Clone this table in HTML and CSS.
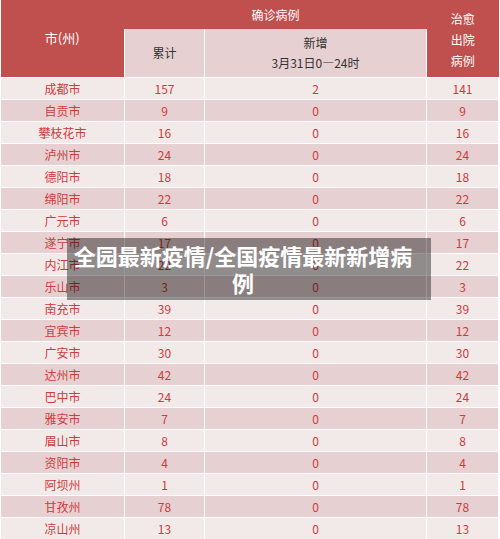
FILE: index.html
```html
<!DOCTYPE html>
<html lang="zh-CN">
<head>
  <meta charset="UTF-8" />
  <title>四川省疫情统计</title>
  <link rel="stylesheet" href="styles.css">
</head>
<body>
  <div class="page">
    <table class="stats">
      <colgroup>
        <col class="c-city">
        <col class="c-total">
        <col class="c-new">
        <col class="c-cured">
      </colgroup>
      <thead>
        <tr class="head-top">
          <th rowspan="2">市(州)</th>
          <th colspan="2">确诊病例</th>
          <th rowspan="2" class="cured">治愈<br>出院<br>病例</th>
        </tr>
        <tr class="head-sub">
          <th class="sub">累计</th>
          <th class="sub">新增<br>3月31日0—24时</th>
        </tr>
      </thead>
      <tbody id="rows"></tbody>
    </table>

    <div class="caption">全园最新疫情/全国疫情最新新增病例</div>
  </div>

  <script>
    var data = [
      ['成都市', 157, 2, 141],
      ['自贡市', 9, 0, 9],
      ['攀枝花市', 16, 0, 16],
      ['泸州市', 24, 0, 24],
      ['德阳市', 18, 0, 18],
      ['绵阳市', 22, 0, 22],
      ['广元市', 6, 0, 6],
      ['遂宁市', 17, 0, 17],
      ['内江市', 22, 0, 22],
      ['乐山市', 3, 0, 3],
      ['南充市', 39, 0, 39],
      ['宜宾市', 12, 0, 12],
      ['广安市', 30, 0, 30],
      ['达州市', 42, 0, 42],
      ['巴中市', 24, 0, 24],
      ['雅安市', 7, 0, 7],
      ['眉山市', 8, 0, 8],
      ['资阳市', 4, 0, 4],
      ['阿坝州', 1, 0, 1],
      ['甘孜州', 78, 0, 78],
      ['凉山州', 13, 0, 13]
    ];

    var tbody = document.getElementById('rows');
    data.forEach(function (r) {
      var tr = document.createElement('tr');
      tr.innerHTML = '<td>' + r[0] + '</td><td>' + r[1] + '</td><td>' + r[2] + '</td><td>' + r[3] + '</td>';
      tbody.appendChild(tr);
    });
  </script>
</body>
</html>
```

FILE: styles.css
```css
body {
  margin: 0;
  background: #fff;
  font-family: "Noto Sans CJK SC", "Noto Sans", sans-serif;
}

.page {
  position: relative;
  width: 500px;
  height: 539px;
  overflow: hidden;
}

.stats {
  width: 498px;
  table-layout: fixed;
  border-collapse: collapse;
  font-size: 12px;
}

.c-city { width: 124px; }
.c-total { width: 80px; }
.c-new { width: 222px; }
.c-cured { width: 72px; }

.stats th {
  background: #c0504d;
  color: #fff;
  font-weight: normal;
  text-align: center;
  padding: 0;
  border: none;
}

.head-top th {
  height: 29px;
  font-size: 12px;
}

.head-top th:first-child {
  font-size: 13px;
  padding-bottom: 2px;
}

.head-top .cured {
  line-height: 21px;
  padding-top: 1px;
}

.stats th.sub {
  background: #e7d0d1;
  color: #333;
  height: 48px;
  line-height: 20px;
  border: 1px solid #fff;
  border-top: none;
}

.stats td {
  height: 21px;
  padding: 0;
  line-height: 21px;
  text-align: center;
  color: #cf3b3d;
  border: 1px solid #fff;
  background: #f2e9e9;
}

.stats tbody tr:nth-child(even) td {
  background: #e7d0d1;
}

.caption {
  position: absolute;
  left: 67px;
  top: 238px;
  width: 364px;
  height: 62px;
  box-sizing: border-box;
  padding: 4px 16px 4px 4px;
  background: rgba(0, 0, 0, 0.4);
  color: #fff;
  font-size: 22px;
  font-weight: bold;
  line-height: 27px;
  text-align: center;
}
```
